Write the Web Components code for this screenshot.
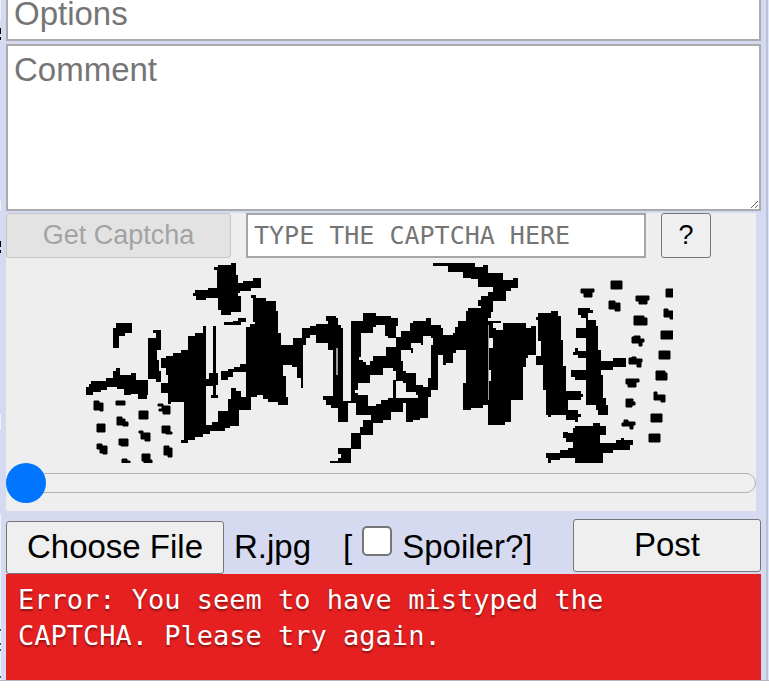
<!DOCTYPE html>
<html lang="en">
<head>
<meta charset="utf-8">
<title>Post form</title>
<style>
    body {
        margin: 0;
        background: #fff;
        color: black;
        font-family: "Liberation Sans", Arial, sans-serif;
        font-size: 33px;
    }
</style>
</head>
<body>

<quick-reply>
    <post-field name="Options"></post-field>
    <post-field name="Comment" multiline></post-field>
    <captcha-box><captcha-image></captcha-image></captcha-box>
    <file-row filename="R.jpg">Post</file-row>
    <error-bar>Error: You seem to have mistyped the CAPTCHA. Please try again.</error-bar>
</quick-reply>

<template id="quick-reply">
<style>
    :host {
        display: grid;
        grid-template-columns: 6px minmax(0, 1fr) 5px 3px;
        background: #d6daf0;
        border-bottom: 1px solid #b5b5c4;
        overflow: hidden;
    }

    .form {
        display: flex;
        flex-direction: column;
    }

    .behind {
        display: block;
        width: 6px;
        height: 680px;
    }

    .edge {
        grid-column: 4;
        border-left: 2px solid #b7c5d9;
        background: #dfe6fa;
    }
</style>
<svg class="behind" viewBox="0 0 6 680" aria-hidden="true">
    <path fill="#eef2ff" d="M0 0h1v20h-1zM0 201h1v10h-1zM0 414h1v16h-1zM0 514h1v166h-1z"/>
    <path fill="#000" d="M0 28h1v6h-1zM0 37h1v3h-1zM0 241h1v6h-1zM0 250h1v3h-1z"/>
    <path fill="#555" d="M0 629h1v2h-1zM0 643h1v2h-1zM0 649h1v2h-1zM0 676h1v2h-1z"/>
</svg>
<div class="form"><slot></slot></div>
<div class="edge"></div>
</template>

<template id="post-field">
<style>
    :host {
        display: block;
        margin-bottom: 3px;
    }

    :host(:first-child) {
        margin-top: -13px;
    }

    input, textarea {
        display: block;
        box-sizing: border-box;
        width: 100%;
        margin: 0;
        padding: 5px 6px;
        border: 2px solid #aaaaaf;
        border-radius: 0;
        background: #fff;
        font: inherit;
        outline: none;
    }

    input {
        height: 54px;
    }

    textarea {
        height: 167px;
    }

    ::placeholder {
        color: #757575;
    }
</style>
</template>

<template id="captcha-box">
<style>
    :host {
        display: block;
        box-sizing: border-box;
        height: 298px;
        margin: -1px 5px 8px 0;
        background: #eee;
        font-size: 27px;
    }

    .controls {
        display: flex;
        gap: 15px;
        margin-bottom: 5px;
    }

    button, .answer {
        box-sizing: border-box;
        height: 45px;
        margin: 0;
        padding: 0;
        font: inherit;
    }

    button {
        border: 1px solid #767676;
        border-radius: 3px;
        background: #efefef;
        color: black;
    }

    .get {
        flex: 0 1 225px;
    }

    .get:disabled {
        border-color: #c6c6c8;
        background: #e3e3e3;
        color: #a3a3a3;
    }

    .answer {
        flex: 0 1 400px;
        min-width: 0;
        padding: 0 6px;
        border: 2px solid #a6a6a8;
        background: #fff;
        font-family: "DejaVu Sans Mono", monospace;
        font-size: 25px;
    }

    .answer::placeholder {
        color: #757575;
    }

    .help {
        flex: 0 0 50px;
    }

    .slider {
        display: block;
        appearance: none;
        box-sizing: border-box;
        width: 100%;
        height: 40px;
        margin: 0;
        background: none;
    }

    .slider::-webkit-slider-runnable-track {
        box-sizing: border-box;
        height: 20px;
        border: 1px solid #b2b2b2;
        border-radius: 10px;
        background: #efefef;
    }

    .slider::-webkit-slider-thumb {
        appearance: none;
        width: 40px;
        height: 40px;
        margin: -11px 0 0 -1px;
        border-radius: 50%;
        background: #0075ff;
    }
</style>
<div class="controls">
    <button class="get" type="button" disabled>Get Captcha</button>
    <input class="answer" type="text" placeholder="TYPE THE CAPTCHA HERE" aria-label="Captcha answer">
    <button class="help" type="button">?</button>
</div>
<slot></slot>
<input class="slider" type="range" min="0" max="100" value="0" aria-label="Captcha position">
</template>

<template id="captcha-image">
<style>
    :host {
        display: block;
    }

    svg {
        display: block;
        width: 100%;
        height: 200px;
    }
</style>
<svg viewBox="6 263 750 200" preserveAspectRatio="xMinYMin meet" aria-hidden="true">
    <!-- strokes -->
    <path d="M116 323H132V333H125V336H119V348H113V328H116z"/>
    <path d="M153 330H161V350H157V360H159V371H161V382H156V379H148V338H156V333H153z"/>
    <path d="M86 387H89V384H91V381H106V378H113V371H116V368H120V375H131V373H136V380H148V395H147V399H138V394H131V395H124V389H117V387H107V390H101V392H93V395H86z"/>
    <path d="M193 293H195V290H208V288H217V270H214V267H218V265H231V263H236V275H238V283H243V281H253V278H261V288H251V291H240V293H238V296H241V312H231V315H221V310H218V298H206V300H196V296H193z"/>
    <path d="M161 358H166V356H173V353H181V350H188V336H195V333H203V326H206V379H209V373H213V326H216V373H218V385H216V395H218V398H211V395H213V386H206V425H212V422H218V411H228V399H231V388H236V391H241V397H246V327H250V324H255V322H253V298H251V295H256V298H266V301H276V311H278V333H281V345H293V338H302V328H310V326H316V324H328V321H326V316H336V318H338V325H341V328H343V401H351V403H348V422H338V408H331V405H326V400H323V396H333V350H328V343H316V335H310V338H306V345H303V388H301V378H297V367H292V365H283V376H286V397H288V405H278V402H268V399H263V395H257V397H251V410H239V426H230V428H225V431H210V434H203V437H195V440H188V443H181V440H184V402H171V404H168V393H161V383H168V375H166V368H161z"/>
    <path d="M221 371H228V369H234V367H240V364H246V372H233V377H228V380H221z"/>
    <path d="M224 322H233V321H238V318H246V322H241V325H224z"/>
    <path d="M351 321H363V313H376V316H391V318H398V326H396V337H401V331H410V323H413V321H426V318H431V325H441V328H443V335H453V333H455V327H458V321H466V311H468V308H481V306H478V300H481V296H488V292H493V287H478V279H471V278H463V272H448V266H433V263H475V267H483V265H488V273H503V280H513V278H518V288H511V291H506V301H493V312H491V318H488V321H501V323H493V328H496V330H503V323H526V328H531V326H536V355H528V358H526V367H523V400H511V422H505V425H488V405H483V408H471V410H463V383H466V350H456V353H453V363H446V365H443V355H438V390H431V397H428V418H420V420H413V422H406V403H403V412H391V420H383V423H373V435H361V449H351V463H330V461H338V458H341V454H338V448H351V433H360V427H363V420H371V415H356V403H348V401H351z"/>
    <path d="M536 317H538V313H551V311H558V316H561V340H563V366H566V391H581V394H583V397H581V400H568V410H578V414H581V417H578V422H575V420H566V415H551V417H548V415H546V390H543V365H536V356H541V341H538V320H536z"/>
    <path d="M578 308H590V310H593V313H588V320H596V326H598V350H601V361H613V358H626V367H613V370H601V375H603V398H606V405H608V415H598V410H596V405H586V380H575V377H571V370H586V358H578V355H573V352H575V348H578V351H586V338H576V328H586V318H581V315H578z"/>
    <path d="M575 426H593V423H600V426H606V435H600V443H616V440H621V438H624V440H633V445H630V450H613V453H603V463H575V458H560V460H551V463H548V458H546V453H560V450H568V448H573V442H566V438H563V432H568V433H573V428H575z"/>
    <!-- gaps inside the strokes -->
    <g fill="#eee">
        <path d="M361 333H373V327H376V325H385V336H388V338H396V347H386V356H373V361H370V365H366V362H363V360H359V357H361z"/>
        <path d="M383 368H393V371H396V380H393V398H388V400H381V404H376V406H368V395H358V393H355V390H358V383H370V375H383z"/>
        <path d="M396 381H403V383H406V392H416V395H418V398H396z"/>
        <path d="M411 343H421V345H423V336H431V338H433V345H431V378H428V387H423V385H416V373H406V371H403V361H401V350H411V353H413V348H411z"/>
        <path d="M489 338h4v10h-4zM489 370h2v11h-2z"/>
        <path fill="#999" d="M336 348h2v27h-2zM488 325h1v75h-1z"/>
    </g>
    <!-- dots, left and right -->
    <g stroke="#000" stroke-width="1">
        <path d="M94 401h5v2h4v8h-3v-1h-6zM116 401h9v4h-9zM139 411h9v8h-9zM158 404h5v2h7v8h-7v-3h-4v-2h3v-3h-4zM97 424h8v8h-8zM117 417h5v2h3v3h3v4h-5v-1h-6zM139 431h4v2h7v8h-5v-2h-4v-6h-2zM162 426h8v6h2v2h-6v-1h-4zM119 439h9v7h-7v-1h-2zM97 444h5v2h5v8h-4v-1h-3v-4h-3zM122 459h5v2h3v2h-8zM142 454h8v6h2v3h-8v-2h-2zM164 446h5v2h3v9h-4v-2h-4z"/>
        <path d="M581 289h13v3h-2v5h-8v-4h-3zM611 281h11v8h-11zM609 301h6v2h5v8h-5v-2h-6zM636 296h13v4h-2v4h-8v-3h-3zM634 316h10v2h3v7h-13zM632 337h2v-1h6v3h4v3h-2v4h-3v-3h-7zM629 358h3v-1h4v2h6v3h-1v5h-4v-3h-8zM626 379h13v3h-3v5h-8v-3h-2zM626 399h7v3h2v3h-3v2h-6zM622 423h2v-3h4v2h7v3h-2v4h-3v-3h-8zM666 289h8v8h-8zM664 309h4v2h6v8h-4v-2h-6zM661 331h13v8h-13zM659 351h11v8h-11zM656 371h9v2h2v7h-11zM654 392h3v3h8v7h-4v-2h-7zM651 414h11v8h-11zM649 434h11v8h-11z"/>
    </g>
    <path fill="#eee" d="M673 263h5v200h-5z"/>
</svg>
</template>

<template id="file-row">
<style>
    :host {
        display: flex;
        align-items: flex-start;
        height: 55px;
    }

    button {
        box-sizing: border-box;
        height: 53px;
        margin: 0;
        padding: 0 0 2px;
        border: 1px solid #767676;
        border-radius: 3px;
        background: #efefef;
        color: black;
        font: inherit;
    }

    .choose {
        flex: 0 0 218px;
        margin-top: 2px;
    }

    .name {
        flex: 0 0 100px;
        margin-left: 10px;
        line-height: 56px;
    }

    .spoiler {
        display: flex;
        align-items: center;
        gap: 10px;
        margin-left: 9px;
        line-height: 56px;
    }

    .spoiler input {
        appearance: none;
        box-sizing: border-box;
        width: 30px;
        height: 30px;
        margin: 0 0 12px;
        border: 2px solid #767676;
        border-radius: 5px;
        background: #fff;
    }

    .spoiler input:checked {
        background: #0075ff;
    }

    .post {
        flex: 0 0 188px;
        margin-left: auto;
    }
</style>
<button class="choose" type="button">Choose File</button>
<input class="file" type="file" hidden>
<span class="name"></span>
<label class="spoiler">[<input type="checkbox"><span>Spoiler?]</span></label>
<button class="post" type="submit"><slot></slot></button>
</template>

<template id="error-bar">
<style>
    :host {
        display: block;
        box-sizing: border-box;
        min-height: 106px;
        padding: 8px 120px 26px 12px;
        background: #e62020;
        color: #fff;
        font-family: "DejaVu Sans Mono", monospace;
        font-size: 27px;
        line-height: 36px;
        text-shadow: 0 2px 2px rgba(0, 0, 0, 0.4);
    }
</style>
<slot></slot>
</template>

<script>
function render(el, id) {
    const root = el.attachShadow({ mode: "open" });
    root.appendChild(document.getElementById(id).content.cloneNode(true));
    return root;
}

class QuickReply extends HTMLElement {
    constructor() {
        super();
        render(this, "quick-reply");
    }
}

class PostField extends HTMLElement {
    constructor() {
        super();
        render(this, "post-field");
    }

    connectedCallback() {
        const name = this.getAttribute("name");
        const field = document.createElement(this.hasAttribute("multiline") ? "textarea" : "input");
        field.placeholder = name;
        field.setAttribute("aria-label", name);
        this.shadowRoot.appendChild(field);
    }
}

class CaptchaBox extends HTMLElement {
    constructor() {
        super();
        render(this, "captcha-box");
    }
}

class CaptchaImage extends HTMLElement {
    constructor() {
        super();
        render(this, "captcha-image");
    }
}

class FileRow extends HTMLElement {
    constructor() {
        super();
        render(this, "file-row");
    }

    connectedCallback() {
        const file = this.shadowRoot.querySelector(".file");
        const name = this.shadowRoot.querySelector(".name");
        name.textContent = this.getAttribute("filename");

        this.shadowRoot.querySelector(".choose").addEventListener("click", () => file.click());
        file.addEventListener("change", () => {
            if (file.files.length) {
                name.textContent = file.files[0].name;
            }
        });
    }
}

class ErrorBar extends HTMLElement {
    constructor() {
        super();
        render(this, "error-bar");
    }
}

customElements.define("quick-reply", QuickReply);
customElements.define("post-field", PostField);
customElements.define("captcha-box", CaptchaBox);
customElements.define("captcha-image", CaptchaImage);
customElements.define("file-row", FileRow);
customElements.define("error-bar", ErrorBar);
</script>
</body>
</html>
